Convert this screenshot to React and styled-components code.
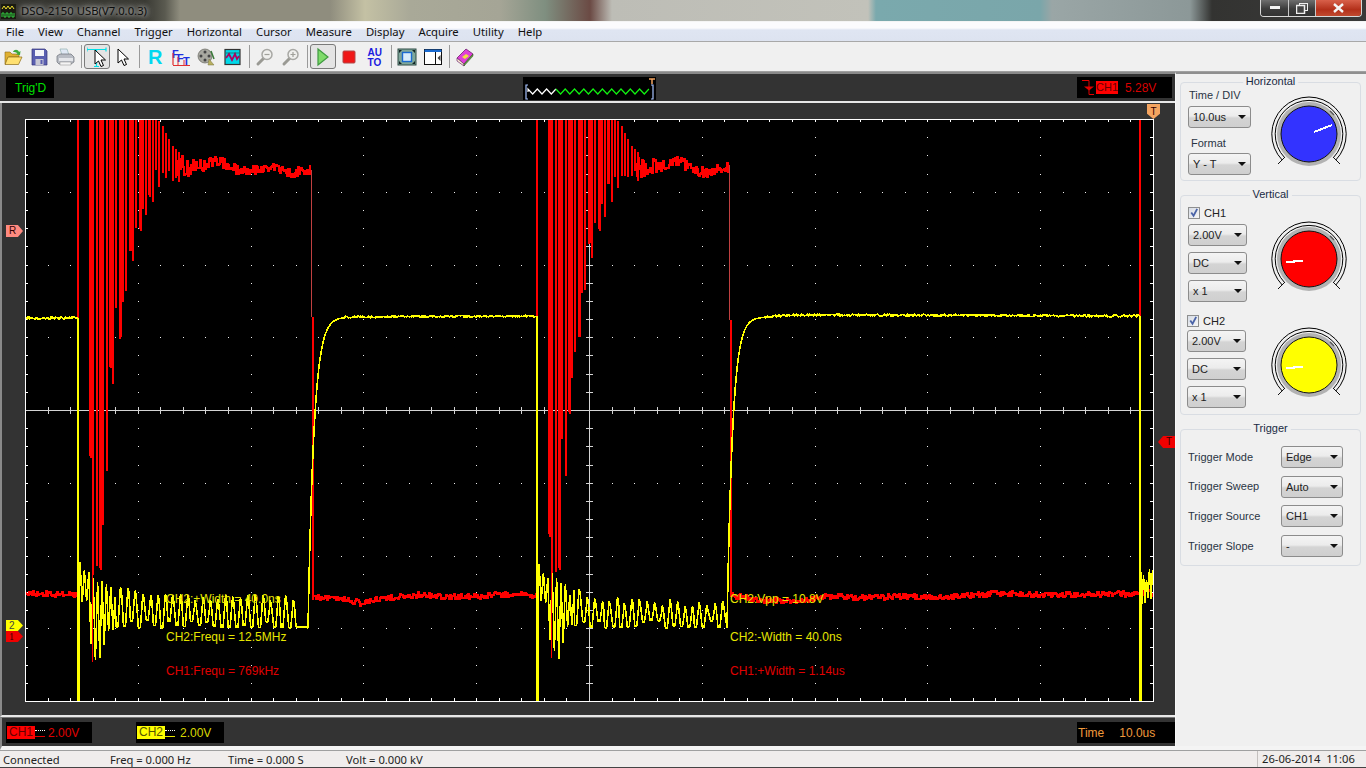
import styled, { createGlobalStyle } from "styled-components";

const GlobalStyle = createGlobalStyle`
  html, body { margin: 0; padding: 0; background: #f0f0f0; overflow: hidden; }
  * { box-sizing: border-box; }
`;

const Window = styled.div`
  width: 1366px;
  height: 768px;
  display: flex;
  flex-direction: column;
  overflow: hidden;
  font-family: "Liberation Sans", Arial, sans-serif;
  font-size: 11px;
  color: #111;
`;

/* ---------- title bar ---------- */
const TitleBar = styled.div`
  height: 22px;
  flex: none;
  display: flex;
  align-items: flex-start;
  border-bottom: 1px solid #f4f4f4;
  background: linear-gradient(90deg, #33332e 0, #3a3a34 145px, #5a5a50 165px, #8f8d7e 180px, #8f8d7e 330px, #c4c1a4 365px,
    #a9a998 410px, #a5a596 500px, #7f8f80 545px, #6b4a44 590px, #bdbdb6 612px, #c2c2ba 868px, #7aa9ad 876px, #7aa6aa 1040px,
    #9aa6a6 1052px, #8c9898 1190px, #333331 1212px, #3a3a3a 1366px);
`;
const AppIcon = styled.svg`
  width: 15px;
  height: 15px;
  margin: 4px 0 0 1px;
`;
const TitleText = styled.span`
  margin: 3px 0 0 5px;
  font-family: "Noto Sans", sans-serif;
  font-size: 11.3px;
  color: #0c0c0c;
  text-shadow: 0 0 4px rgba(255, 255, 255, 0.8), 0 0 8px rgba(255, 255, 255, 0.6), 0 0 12px rgba(255, 255, 255, 0.4);
`;
const WinButtons = styled.div`
  margin-left: auto;
  margin-right: 4px;
  display: flex;
  height: 17px;
  border: 1px solid #d8d8d8;
  border-top: 0;
  border-radius: 0 0 4px 4px;
  overflow: hidden;
`;
const WinButton = styled.div`
  width: ${(p) => p.$w}px;
  display: flex;
  align-items: center;
  justify-content: center;
  border-left: ${(p) => (p.$first ? "0" : "1px solid #c8c8c8")};
  background: ${(p) => (p.$close ? "linear-gradient(#d8604a, #b3301a 60%, #c04a30)" : "linear-gradient(#6e6e6e, #3c3c3c 55%, #333)")};
`;

/* ---------- menu ---------- */
const MenuBar = styled.div`
  height: 20px;
  flex: none;
  display: flex;
  align-items: center;
  gap: 14px;
  padding-left: 6px;
  border-bottom: 1px solid #a8a8a8;
  background: linear-gradient(#fbfbfd 0, #fbfbfd 6px, #dfe5f2 8px, #dde3f0 100%);
  font-family: "Noto Sans", sans-serif;
  font-size: 11.3px;
  color: #111;
`;
const MenuItem = styled.span``;

/* ---------- toolbar ---------- */
const ToolBar = styled.div`
  height: 30px;
  flex: none;
  display: flex;
  align-items: center;
  background: #f0f0f0;
  border-bottom: 1px solid #a0a0a0;
`;
const ToolButton = styled.div`
  width: 26px;
  height: 25px;
  display: flex;
  align-items: center;
  justify-content: center;
  border-radius: 3px;
  border: 1px solid ${(p) => (p.$pressed ? "#7a7a7a" : "transparent")};
  background: ${(p) => (p.$pressed ? "#e4e4e4" : "transparent")};
`;
const ToolSep = styled.div`
  width: 1px;
  height: 23px;
  margin: 0 2px 0 3px;
  background: #9a9a9a;
`;
const Ico = styled.svg`
  width: 20px;
  height: 20px;
  display: block;
`;

/* ---------- main body ---------- */
const Body = styled.div`
  flex: 1;
  min-height: 0;
  display: flex;
`;
const Scope = styled.div`
  width: 1175px;
  flex: none;
  display: flex;
  flex-direction: column;
  background: #333;
`;
const TopStrip = styled.div`
  height: 31px;
  flex: none;
  display: grid;
  grid-template-columns: 1fr 133px 1fr;
  align-items: start;
  padding: 3px 3px 0 6px;
  border-top: 2px solid #8a8a8a;
  border-bottom: 2px solid #e8e8e8;
`;
const BlackBox = styled.div`
  background: #000;
  height: 21px;
  display: flex;
  align-items: center;
  font-size: 12px;
  white-space: nowrap;
`;
const TrigState = styled(BlackBox)`
  width: 48px;
  padding-left: 9px;
  color: #00e000;
`;
const MiniWave = styled.svg`
  display: block;
  width: 133px;
  height: 23px;
  background: #000;
`;
const TrigInfo = styled(BlackBox)`
  justify-self: end;
  width: 95px;
  padding-left: 4px;
`;
const TrigGlyph = styled.svg`
  width: 14px;
  height: 17px;
  margin-right: 1px;
`;
const Chip = styled.span`
  background: ${(p) => p.$bg};
  color: ${(p) => p.$fg};
  font-size: ${(p) => p.$size}px;
  line-height: 13px;
  padding: 0 ${(p) => p.$pad}px;
`;
const InfoValue = styled.span`
  color: ${(p) => p.$color};
  margin-left: ${(p) => p.$gap}px;
`;

const Screen = styled.div`
  position: relative;
  flex: 1;
  min-height: 0;
  padding: 16px 0 0 23px;
  border-left: 2px solid #8a8a8a;
  border-bottom: 2px solid #e8e8e8;
`;
const PlotSvg = styled.svg`
  display: block;
  width: 1129px;
  height: 583px;
`;
const Readout = styled.span`
  position: absolute;
  left: ${(p) => p.$x - 2}px;
  top: ${(p) => p.$y - 103 - 6}px;
  color: ${(p) => p.$color};
  font-size: 12px;
  line-height: 14px;
  white-space: nowrap;
`;
const Marker = styled.div`
  position: absolute;
  left: ${(p) => p.$x - 2}px;
  top: ${(p) => p.$y - 103}px;
  width: ${(p) => p.$w}px;
  height: ${(p) => p.$h}px;
  background: ${(p) => p.$bg};
  clip-path: ${(p) => p.$clip};
  color: ${(p) => p.$fg || "#300"};
  font-family: ${(p) => (p.$serif ? '"Liberation Serif", serif' : '"Liberation Sans", sans-serif')};
  font-size: 10px;
  line-height: ${(p) => p.$h}px;
  text-align: ${(p) => p.$align || "left"};
  padding: 0 3px;
`;

const BottomStrip = styled.div`
  height: 33px;
  flex: none;
  display: flex;
  align-items: flex-start;
  padding: 4px 0 0 4px;
  border-top: 1px solid #777;
  border-bottom: 4px solid #f4f4f4;
  border-left: 2px solid #8a8a8a;
`;
const ChannelBox = styled(BlackBox)`
  width: ${(p) => p.$w}px;
  margin-right: ${(p) => p.$mr}px;
  padding-left: 1px;
`;
const GroundRef = styled.span`
  width: 10px;
  height: 7px;
  flex: none;
  border-top: 1px dotted #fff;
  border-bottom: 1px solid ${(p) => p.$color};
  margin-top: 1px;
`;
const TimeBox = styled(BlackBox)`
  width: 98px;
  margin-left: auto;
  padding-left: 1px;
  color: #f09a3c;
`;

/* ---------- side panel ---------- */
const Panel = styled.div`
  flex: 1;
  display: flex;
  flex-direction: column;
  gap: 14px;
  padding: 8px 5px 0 4px;
  background: #f0f0f0;
  border-top: 2px solid #8f8f8f;
  border-left: 1px solid #f8f8f8;
  border-bottom: 4px solid #f4f4f4;
`;
const Group = styled.div`
  position: relative;
  height: ${(p) => p.$h}px;
  border: 1px solid #d9dde3;
  border-radius: 4px;
  padding: ${(p) => p.$pad || "0"};
`;
const GroupTitle = styled.span`
  position: absolute;
  top: -8px;
  left: 50%;
  transform: translateX(-50%);
  background: #f0f0f0;
  padding: 0 3px;
  font-size: 11px;
  line-height: 13px;
  color: #1a2a44;
  white-space: nowrap;
`;
const KnobRow = styled.div`
  display: flex;
  align-items: flex-start;
`;
const Controls = styled.div`
  width: ${(p) => p.$w}px;
  flex: none;
  display: flex;
  flex-direction: column;
`;
const FieldLabel = styled.div`
  font-size: 11px;
  line-height: 13px;
  color: #2a3444;
  margin: ${(p) => p.$m};
`;
const SelectBox = styled.div`
  width: ${(p) => p.$w}px;
  height: 22px;
  flex: none;
  position: relative;
  display: flex;
  align-items: center;
  padding-left: 4px;
  border: 1px solid #8c8c8c;
  border-radius: 3px;
  background: linear-gradient(#f4f4f4 0, #ececec 45%, #d4d4d4 55%, #cfcfcf 100%);
  font-size: 11px;
  color: #222;
  &::after {
    content: "";
    position: absolute;
    right: 4px;
    top: 8px;
    border-left: 4px solid transparent;
    border-right: 4px solid transparent;
    border-top: 4px solid #111;
  }
`;
const CheckRow = styled.div`
  display: flex;
  align-items: center;
  gap: 4px;
  font-size: 11px;
  color: #222;
  height: 12px;
  margin-bottom: ${(p) => p.$mb}px;
`;
const CheckBox = styled.span`
  width: 12px;
  height: 12px;
  display: flex;
  border: 1px solid #8e8f8f;
  background: linear-gradient(135deg, #d8dde6, #f6f6f6);
`;
const ChannelStack = styled.div`
  display: flex;
  flex-direction: column;
  gap: 6px;
`;
const Knob = styled.svg`
  width: 80px;
  height: 76px;
  flex: none;
  display: block;
  margin: ${(p) => p.$m};
`;
const VerticalSet = styled.div`
  display: flex;
  align-items: flex-start;
  margin: ${(p) => p.$m};
`;
const TriggerRows = styled.div`
  display: flex;
  flex-direction: column;
  gap: 7.7px;
`;
const TriggerRow = styled.div`
  display: flex;
  align-items: center;
  justify-content: space-between;
  padding-right: 17px;
`;

/* ---------- status bar ---------- */
const StatusBar = styled.div`
  height: 18px;
  flex: none;
  display: flex;
  align-items: center;
  padding-left: 3px;
  background: #f0edec;
  border-top: 1px solid #a0a0a0;
  border-bottom: 1px solid #444;
  font-family: "Noto Sans", sans-serif;
  font-size: 11.2px;
  color: #222;
`;
const StatusCell = styled.span`
  width: ${(p) => p.$w}px;
  white-space: nowrap;
`;
const StatusClock = styled.span`
  margin-left: auto;
  width: 109px;
  height: 100%;
  padding-left: 4px;
  border-left: 1px solid #c4c0be;
  white-space: nowrap;
`;

/* ---------- trace generation ---------- */
const makeRng = (seed) => () => {
  seed = (seed * 1664525 + 1013904223) % 4294967296;
  return seed / 4294967296;
};
const interp = (t, x) => {
  if (x <= t[0][0]) return t[0][1];
  for (let i = 1; i < t.length; i++) {
    if (x <= t[i][0]) {
      const [a, b] = [t[i - 1], t[i]];
      return a[1] + ((b[1] - a[1]) * (x - a[0])) / (b[0] - a[0]);
    }
  }
  return t[t.length - 1][1];
};
const r1 = (n) => Math.round(n * 10) / 10;

const rnd = makeRng(77);
const noisy = (x0, x1, table, amp, step = 1) => {
  let d = `M${x0} ${interp(table, x0)}`;
  for (let x = x0; x <= x1; x += step) {
    const a = typeof amp === "function" ? amp(x) : amp;
    const y = r1(interp(table, x) + (rnd() - 0.5) * 2 * a);
    d += `V${y}H${r1(x)}`;
  }
  return d;
};

const botEnv = [[12, 575], [22, 570], [27, 500], [33, 395], [42, 335], [47, 297], [54, 263], [60, 235], [67, 217], [74, 202], [80, 187], [87, 177], [95, 178], [104, 180]];
const topEnv = [[12, 119], [80, 119], [84, 125], [89, 135], [95, 147], [104, 154]];
const bandEnv = [[98, 166], [122, 167], [140, 160], [162, 171], [172, 172], [190, 167], [215, 172], [233, 170]];

const redBurst = (x0, end) => {
  let d = `M${x0} 600V119`;
  let i = 0;
  for (let rel = 12; rel < 104; rel += 3.3, i++) {
    const x = r1(x0 + rel);
    const bot = interp(botEnv, rel);
    const top = interp(topEnv, rel);
    const y = i % 2 ? bot : top + (bot - top) * (0.72 + rnd() * 0.28);
    d += `M${x} ${r1(top)}V${r1(y + (rnd() - 0.5) * 6)}`;
    if (rel < 80 && i % 3 === 0) d += `M${x + 1} ${r1(top)}V${r1(y)}`;
  }
  const amp = (x) => (x - x0 < 128 ? 5 + (128 - (x - x0)) * 0.3 : 5);
  d += noisy(x0 + 98, end, bandEnv.map(([a, b]) => [a + x0, b]), amp);
  return d;
};
const base1 = [[25, 594], [78, 594]];
const base2 = [[314, 597], [345, 599], [362, 603], [385, 598], [420, 595], [450, 597], [480, 596], [510, 594], [537, 595]];
const base3 = [[731, 595], [760, 600], [800, 601], [830, 596], [860, 598], [900, 596], [950, 597], [1000, 593], [1050, 595], [1100, 594], [1140, 594]];
const RED = [
  noisy(25, 78, base1, 2.8),
  redBurst(78, 311),
  noisy(314, 537, base2, 2.8),
  redBurst(537, 729),
  noisy(731, 1140, base3, 2.8),
  "M1140 119V320",
  noisy(1141, 1153, [[1141, 590], [1153, 594]], 4),
].join("");
const RED_THIN = "M311.5 170V317M729.5 165V320";
const RED_DROP = "M313 317V600M731 320V596";
const RED_SPIKES = "M92 560V662M551 560V658";

const earlyTop = [[2, 562], [10, 570], [20, 575], [30, 585], [40, 590]];
const earlyBot = [[2, 600], [10, 610], [14, 660], [22, 665], [30, 640], [38, 632], [45, 630]];
const ringing = (x0, endRel, topTable, bottom) => {
  let d = `M${x0 + 1} 701V568`;
  let up = true;
  for (let rel = 2; rel < 38; rel += 2.2, up = !up) {
    const y = up ? interp(earlyTop, rel) + rnd() * 10 : interp(earlyBot, rel) - rnd() * 14;
    d += `L${r1(x0 + rel)} ${r1(y)}`;
  }
  for (let rel = 38; rel < endRel; rel += 7.5) {
    const x = x0 + rel + (rnd() - 0.5);
    const top = interp(topTable, rel) + (rnd() - 0.5) * 7;
    const bot = bottom - rnd() * 3 - (rnd() > 0.8 ? 5 : 0);
    d += `L${r1(x)} ${r1(bot)}H${r1(x + 2)}L${r1(x + 4)} ${r1(top + 6)}L${r1(x + 4.5)} ${r1(top)}L${r1(x + 5.5)} ${r1(top + 4)}`;
  }
  return d;
};
const riseTo = (x0, x1, tau) => {
  let d = "";
  for (let x = x0; x <= x1; x += 1) {
    d += `L${x} ${r1(317 + 311 * Math.exp(-(x - x0) / tau))}`;
  }
  return d;
};
const flat1 = [[25, 318], [345, 317], [537, 316]];
const flat2 = [[765, 317], [790, 315], [850, 315], [1140, 316]];
let squiggle = "M1141 701V572";
for (let x = 1142, up = false; x < 1154; x += 1.5, up = !up) squiggle += `L${x} ${up ? 566 + rnd() * 14 : 596 + rnd() * 12}`;
const YELLOW = [
  noisy(25, 78, flat1, 1.2),
  "M78 318V701",
  ringing(78, 218, [[30, 585], [60, 592], [100, 597], [218, 599]], 628) + "L296 627H307" + riseTo(308, 345, 6),
  noisy(345, 537, flat1, 1),
  "M537 316V701",
  ringing(537, 186, [[30, 590], [60, 598], [100, 602], [186, 604]], 628) + riseTo(727, 765, 5.6),
  noisy(765, 1140, flat2, 1.2),
  "M1140 316V701",
  squiggle,
].join("");

/* graticule */
const DX = 22.56;
const DY = 18.19;
const L = 25, T = 119, R = 1153, B = 701;
let dots = "", ticks = "", centre = "";
for (let i = 1; i < 50; i++) {
  const x = Math.round(L + i * DX) + 0.5;
  ticks += `M${x} ${T}v${i === 25 ? 6 : 3}M${x} ${B}v${i === 25 ? -6 : -3}`;
  centre += `M${x} 407v7`;
  for (let k = 1; k < 8; k++) dots += `M${x - 0.5} ${Math.round(T + k * 72.75)}h1v1h-1z`;
}
for (let i = 1; i < 32; i++) {
  const y = Math.round(T + i * DY) + 0.5;
  ticks += `M${L} ${y}h3M${R} ${y}h-3`;
  centre += `M586 ${y}h7`;
  for (let k = 1; k < 10; k++) dots += `M${Math.round(L + k * 112.8)} ${y - 0.5}h1v1h-1z`;
}

/* ---------- small drawings ---------- */
const Graticule = () => (
  <PlotSvg viewBox="25 119 1129 583" shapeRendering="crispEdges">
    <rect x="25" y="119" width="1129" height="583" fill="#000" />
    <path d={dots} fill="#eee" />
    <path d={ticks} stroke="#fff" strokeWidth="1" fill="none" />
    <path d="M589.5 119V701M25 410.5H1153" stroke="#d4d4d4" strokeWidth="1" />
    <path d={centre} stroke="#d4d4d4" strokeWidth="1" fill="none" />
    <path d={RED} stroke="#ff0000" strokeWidth="2" fill="none" />
    <path d={RED_THIN} stroke="#c04040" strokeWidth="1" fill="none" />
    <path d={RED_DROP} stroke="#ff0000" strokeWidth="2" fill="none" />
    <path d={YELLOW} stroke="#ffff00" strokeWidth="1.6" fill="none" strokeLinejoin="bevel" />
    <path d={RED_SPIKES} stroke="#ff0000" strokeWidth="1" fill="none" />
    <rect x="25.5" y="119.5" width="1127.5" height="581.5" fill="none" stroke="#fff" strokeWidth="1" />
  </PlotSvg>
);

const zigzag = (() => {
  let white = "M5 15";
  let x = 5, up = true;
  const pts = [];
  while (x < 126) {
    pts.push([r1(x), up ? 12 : 17]);
    x += 4.65;
    up = !up;
  }
  pts.forEach(([a, b]) => {
    if (a <= 35) white += `L${a} ${b}`;
  });
  const split = pts.findIndex(([a]) => a > 35) - 1;
  const green = "M" + pts.slice(split).map(([a, b]) => `${a} ${b}`).join("L");
  return { white, green };
})();

const Dial = ({ color, needle, m }) => {
  const arc = (r) => `M${-r * 0.72} ${r * 0.7}A${r} ${r} 0 1 1 ${r * 0.72} ${r * 0.7}`;
  return (
    <Knob viewBox="-40 -38 80 76" $m={m}>
      <path d={arc(37.2)} fill="none" stroke="#000" strokeWidth="1" />
      <path d={arc(33.8)} fill="none" stroke="#000" strokeWidth="1" />
      <circle r="32" fill="#b2b2b2" />
      <path d="M21 -23l4 4" stroke="#555" strokeWidth="1.2" />
      <path d="M-24 23L-31 30M24 23L31 30" stroke="#111" strokeWidth="1" />
      <circle r="28" fill={color} stroke="#111" strokeWidth="1" />
      <path d={needle} fill="none" stroke="#fff" strokeWidth="2" shapeRendering="crispEdges" />
    </Knob>
  );
};

const Tick = () => (
  <svg width="10" height="10" viewBox="0 0 10 11">
    <path d="M2 5l2.5 3.5L8.5 1" fill="none" stroke="#4b64a8" strokeWidth="2" />
  </svg>
);

const OpenIcon = () => (
  <Ico viewBox="0 0 20 20">
    <path d="M2 5h5l2 2h7v3H6l-3 7H2z" fill="#e0b030" stroke="#8a6a18" strokeWidth=".6" />
    <path d="M5 10h14l-3.500 7.500H2z" fill="#ffe070" stroke="#8a6a18" strokeWidth=".7" />
    <path d="M10 5c1-3 5-3 6 0l1.500-1-.5 4-4-.5 1.500-1c-1-1.500-3-1.500-4.500-1.500z" fill="#3aa83a" />
  </Ico>
);
const SaveIcon = () => (
  <Ico viewBox="0 0 20 20">
    <path d="M3 2h13l2 2v14H3z" fill="#5a5fb0" stroke="#33357a" strokeWidth=".7" />
    <rect x="6" y="3" width="9" height="6" fill="#f4f4f8" />
    <rect x="6.500" y="12" width="8" height="6" fill="#c8c8d4" />
    <rect x="11.500" y="13" width="2" height="4" fill="#5a5fb0" />
  </Ico>
);
const PrintIcon = () => (
  <Ico viewBox="0 0 20 20">
    <path d="M5 2h7l2 6H7z" fill="#dfe8f4" stroke="#8aa" strokeWidth=".6" />
    <path d="M2 9l3-2h11l3 3v5l-3 2H4l-2-2z" fill="#b8bcc4" stroke="#6c7078" strokeWidth=".7" />
    <path d="M4 11h14v3H4z" fill="#e4e6ea" />
    <path d="M5 15h11v3H5z" fill="#f4f4f4" stroke="#888" strokeWidth=".5" />
  </Ico>
);
const Arrow = ({ transform }) => (
  <path d="M0 0v14l3.500-3 2.500 5.500 2.500-1-2.500-5.500h4.500z" fill="#fff" stroke="#000" strokeWidth="1" transform={transform} strokeLinejoin="miter" />
);
const CursorIcon = () => (
  <Ico viewBox="0 0 20 20">
    <path d="M0 2.500h19M9.500 2.500v17M0 .5v4M19 .5v4M7 19.500h5" stroke="#00e0e8" strokeWidth="1.200" fill="none" />
    <Arrow transform="translate(8 3)" />
  </Ico>
);
const ArrowIcon = () => (
  <Ico viewBox="0 0 20 20">
    <Arrow transform="translate(5 2)" />
  </Ico>
);
const IconText = styled.text`
  font-family: "Liberation Sans", sans-serif;
  font-weight: 700;
`;
const RIcon = () => (
  <Ico viewBox="0 0 20 20">
    <IconText x="3" y="17" fontSize="20" fill="#00d8f0">R</IconText>
  </Ico>
);
const FftIcon = () => (
  <Ico viewBox="0 0 20 20">
    <IconText x="1" y="11" fontSize="11" fill="#2030e0">F</IconText>
    <IconText x="6" y="15" fontSize="11" fill="#2030e0">F</IconText>
    <IconText x="12" y="18" fontSize="11" fill="#2030e0">T</IconText>
    <path d="M2 6v12M2 18.500h17" stroke="#e03030" strokeWidth="1.200" />
    <path d="M7 10v8M13 13v5" stroke="#e03030" strokeWidth="1" />
  </Ico>
);
const ReelIcon = () => (
  <Ico viewBox="0 0 20 20">
    <circle cx="8" cy="9" r="7" fill="#a8a8a0" stroke="#66665e" strokeWidth=".7" />
    <circle cx="8" cy="5" r="1.500" fill="#444" />
    <circle cx="4" cy="9" r="1.500" fill="#444" />
    <circle cx="12" cy="9" r="1.500" fill="#444" />
    <circle cx="8" cy="13" r="1.500" fill="#444" />
    <path d="M12 12l5 6h-6z" fill="#b8b060" stroke="#7a7440" strokeWidth=".5" />
    <path d="M14 4l3 8" stroke="#3a7a3a" strokeWidth="1.500" />
  </Ico>
);
const WaveIcon = () => (
  <Ico viewBox="0 0 20 20">
    <rect x="2" y="2.500" width="15" height="15" fill="#00d8e8" stroke="#333" strokeWidth="1.200" />
    <path d="M3 11l3-4 3 6 3-6 2 5 2-3" fill="none" stroke="#b00060" strokeWidth="1.800" />
    <path d="M3 6h13" stroke="#333" strokeWidth=".6" />
  </Ico>
);
const LensIcon = ({ plus }) => (
  <Ico viewBox="0 0 20 20">
    <path d="M9 11l-6 6" stroke="#9a9a94" strokeWidth="3" strokeLinecap="round" />
    <circle cx="12" cy="7.500" r="5" fill="#f0f0ee" stroke="#a8a8a4" strokeWidth="1.500" />
    <path d={plus ? "M9.500 7.500h5M12 5v5" : "M9.500 7.500h5"} stroke="#a0a09a" strokeWidth="1.200" />
  </Ico>
);
const PlayIcon = () => (
  <Ico viewBox="0 0 20 20">
    <path d="M5 2l10 8-10 8z" fill="#7edb6a" stroke="#3f9a40" strokeWidth="1.200" />
  </Ico>
);
const StopIcon = () => (
  <Ico viewBox="0 0 20 20">
    <rect x="4" y="4" width="12" height="12" rx="1" fill="#f01818" stroke="#b04848" strokeWidth="1" />
  </Ico>
);
const AutoIcon = () => (
  <Ico viewBox="0 0 20 20">
    <IconText x="2.500" y="9" fontSize="10" fill="#1a1ae0">AU</IconText>
    <IconText x="2.500" y="18.500" fontSize="10" fill="#1a1ae0">TO</IconText>
  </Ico>
);
const FullIcon = () => (
  <Ico viewBox="0 0 20 20">
    <rect x="1" y="2" width="18" height="16" fill="#7fa79a" stroke="#2e4a44" strokeWidth="1" />
    <rect x="5.500" y="5.500" width="9" height="9" fill="#d8ecfa" stroke="#1a6ad0" strokeWidth="1.400" />
    <path d="M2 3h3L2 6zM18 3h-3l3 3zM2 17h3l-3-3zM18 17h-3l3-3z" fill="#122" />
  </Ico>
);
const DockIcon = () => (
  <Ico viewBox="0 0 20 20">
    <rect x="1.500" y="2.500" width="17" height="15" fill="#fff" stroke="#111" strokeWidth="1" />
    <rect x="1.500" y="2.500" width="17" height="2.500" fill="#1a6ad0" />
    <path d="M12.500 5v12.500" stroke="#111" strokeWidth="1" />
    <path d="M17.500 8v6l-3-3z" fill="#444" />
  </Ico>
);
const BookIcon = () => (
  <Ico viewBox="0 0 20 20">
    <path d="M2 11l9-9 7 5-9 10z" fill="#e040d8" stroke="#702070" strokeWidth=".8" />
    <path d="M2 11v3l7 5v-2z" fill="#f8f0d0" stroke="#702070" strokeWidth=".7" />
    <path d="M9 19l9-10V7l-9 10z" fill="#60a040" stroke="#305020" strokeWidth=".5" />
    <path d="M7 10l4-3 3 2-4 3z" fill="#f0e040" />
  </Ico>
);

/* ---------- data ---------- */
const menus = ["File", "View", "Channel", "Trigger", "Horizontal", "Cursor", "Measure", "Display", "Acquire", "Utility", "Help"];
const readouts = [
  { x: 166, y: 598, c: "#e6e600", t: "CH2:+Width = 40.0ns" },
  { x: 166, y: 636, c: "#e6e600", t: "CH2:Frequ = 12.5MHz" },
  { x: 166, y: 670, c: "#e00000", t: "CH1:Frequ = 769kHz" },
  { x: 730, y: 598, c: "#e6e600", t: "CH2:Vpp = 10.8V" },
  { x: 730, y: 636, c: "#e6e600", t: "CH2:-Width = 40.0ns" },
  { x: 730, y: 670, c: "#e00000", t: "CH1:+Width = 1.14us" },
];
const triggers = [
  ["Trigger Mode", "Edge"],
  ["Trigger Sweep", "Auto"],
  ["Trigger Source", "CH1"],
  ["Trigger Slope", "-"],
];
const PENT_R = "polygon(0 0, 70% 0, 100% 50%, 70% 100%, 0 100%)";
const PENT_L = "polygon(30% 0, 100% 0, 100% 100%, 30% 100%, 0 50%)";
const PENT_D = "polygon(0 0, 100% 0, 100% 65%, 50% 100%, 0 65%)";

const ChannelControls = ({ name, gap, w }) => (
  <ChannelStack>
    <CheckRow $mb={gap - 6}>
      <CheckBox><Tick /></CheckBox>
      {name}
    </CheckRow>
    <SelectBox $w={w}>2.00V</SelectBox>
    <SelectBox $w={w}>DC</SelectBox>
    <SelectBox $w={w}>x 1</SelectBox>
  </ChannelStack>
);

export default function App() {
  return (
    <Window>
      <GlobalStyle />
      <TitleBar>
        <AppIcon viewBox="0 0 15 15">
          <rect width="15" height="15" fill="#1a1a10" />
          <path d="M1 5l2-3 2 3 2-3 2 3 2-3 2 3" fill="none" stroke="#f0e030" strokeWidth="1" />
          <path d="M1 13V9h2v4h2V9h2v4h2V9h2v4h2V9" fill="none" stroke="#30d040" strokeWidth="1" />
        </AppIcon>
        <TitleText>DSO-2150 USB(V7.0.0.3)</TitleText>
        <WinButtons>
          <WinButton $w={27} $first>
            <svg width="10" height="4"><rect width="10" height="3" fill="#f4f4f4" /></svg>
          </WinButton>
          <WinButton $w={27}>
            <svg width="12" height="11" viewBox="0 0 12 11">
              <rect x="3.500" y=".5" width="8" height="7" fill="none" stroke="#eee" />
              <rect x=".5" y="2.500" width="8" height="8" fill="#444" stroke="#eee" strokeWidth="1.500" />
            </svg>
          </WinButton>
          <WinButton $w={46} $close>
            <svg width="11" height="10" viewBox="0 0 11 10">
              <path d="M1 1l9 8M10 1l-9 8" stroke="#f4f4f4" strokeWidth="2.400" />
            </svg>
          </WinButton>
        </WinButtons>
      </TitleBar>

      <MenuBar>
        {menus.map((m) => (
          <MenuItem key={m}>{m}</MenuItem>
        ))}
      </MenuBar>

      <ToolBar>
        <ToolButton><OpenIcon /></ToolButton>
        <ToolButton><SaveIcon /></ToolButton>
        <ToolButton><PrintIcon /></ToolButton>
        <ToolSep />
        <ToolButton $pressed><CursorIcon /></ToolButton>
        <ToolButton><ArrowIcon /></ToolButton>
        <ToolSep />
        <ToolButton><RIcon /></ToolButton>
        <ToolButton><FftIcon /></ToolButton>
        <ToolButton><ReelIcon /></ToolButton>
        <ToolButton><WaveIcon /></ToolButton>
        <ToolSep />
        <ToolButton><LensIcon /></ToolButton>
        <ToolButton><LensIcon plus /></ToolButton>
        <ToolSep />
        <ToolButton $pressed><PlayIcon /></ToolButton>
        <ToolButton><StopIcon /></ToolButton>
        <ToolButton><AutoIcon /></ToolButton>
        <ToolSep />
        <ToolButton><FullIcon /></ToolButton>
        <ToolButton><DockIcon /></ToolButton>
        <ToolSep />
        <ToolButton><BookIcon /></ToolButton>
      </ToolBar>

      <Body>
        <Scope>
          <TopStrip>
            <TrigState>Trig'D</TrigState>
            <MiniWave viewBox="0 0 133 23">
              <path d="M5 8H3V22H5M128 8h2V22H128" fill="none" stroke="#a8c4ff" strokeWidth="1.200" />
              <path d={zigzag.white} fill="none" stroke="#fff" strokeWidth="1.200" />
              <path d={zigzag.green} fill="none" stroke="#10f010" strokeWidth="1.200" />
              <path d="M126 2h6M129 2v5" stroke="#f4a460" strokeWidth="1.500" />
            </MiniWave>
            <TrigInfo>
              <TrigGlyph viewBox="0 0 14 17">
                <path d="M1 1.500h7V15.500h5" fill="none" stroke="#e00000" strokeWidth="1" />
                <path d="M3 7.500h10L8 11.500z" fill="#e00000" />
              </TrigGlyph>
              <Chip $bg="#ff0000" $fg="#600" $size={11} $pad={0}>CH1</Chip>
              <InfoValue $color="#d80000" $gap={7}>5.28V</InfoValue>
            </TrigInfo>
          </TopStrip>

          <Screen>
            <Graticule />
            {readouts.map((r) => (
              <Readout key={r.t} $x={r.x} $y={r.y} $color={r.c}>{r.t}</Readout>
            ))}
            <Marker $x={6} $y={225} $w={17} $h={12} $bg="#ff8a80" $clip={PENT_R}>R</Marker>
            <Marker $x={6} $y={620} $w={17} $h={11} $bg="#ffff00" $clip={PENT_R} $fg="#444">2</Marker>
            <Marker $x={6} $y={631} $w={17} $h={11} $bg="#f00000" $clip={PENT_R} $serif>1</Marker>
            <Marker $x={1147} $y={104} $w={13} $h={15} $bg="#f4a460" $clip={PENT_D} $align="center">T</Marker>
            <Marker $x={1158} $y={436} $w={17} $h={12} $bg="#f00000" $clip={PENT_L} $align="right">T</Marker>
          </Screen>

          <BottomStrip>
            <ChannelBox $w={86} $mr={44}>
              <Chip $bg="#ff0000" $fg="#600" $size={12} $pad={2}>CH1</Chip>
              <GroundRef $color="#e00000" />
              <InfoValue $color="#e00000" $gap={3}>2.00V</InfoValue>
            </ChannelBox>
            <ChannelBox $w={88} $mr={0}>
              <Chip $bg="#ffff00" $fg="#550" $size={12} $pad={2}>CH2</Chip>
              <GroundRef $color="#e6e600" />
              <InfoValue $color="#d8d800" $gap={5}>2.00V</InfoValue>
            </ChannelBox>
            <TimeBox>
              Time
              <InfoValue $color="#f09a3c" $gap={15}>10.0us</InfoValue>
            </TimeBox>
          </BottomStrip>
        </Scope>

        <Panel>
          <Group $h={99} $pad="6px 0 0 7px">
            <GroupTitle>Horizontal</GroupTitle>
            <KnobRow>
              <Controls $w={63}>
                <FieldLabel $m="0 0 4px 1px">Time / DIV</FieldLabel>
                <SelectBox $w={63}>10.0us</SelectBox>
                <FieldLabel $m="9px 0 3px 3px">Format</FieldLabel>
                <SelectBox $w={63}>Y - T</SelectBox>
              </Controls>
              <Dial color="#3333ff" needle="M5 -2L23 -9" m="7px 0 0 18px" />
            </KnobRow>
          </Group>

          <Group $h={220} $pad="11px 0 0 7px">
            <GroupTitle>Vertical</GroupTitle>
            <VerticalSet $m="0">
              <ChannelControls name="CH1" gap={5} w={59} />
              <Dial color="#ff0000" needle="M-23 3H-15V2H-6" m="14px 0 0 22px" />
            </VerticalSet>
            <VerticalSet $m="13px 0 0 -1px">
              <ChannelControls name="CH2" gap={3} w={59} />
              <Dial color="#ffff00" needle="M-23 3H-15V2H-6" m="12px 0 0 23px" />
            </VerticalSet>
          </Group>

          <Group $h={137} $pad="16px 0 0 7px">
            <GroupTitle>Trigger</GroupTitle>
            <TriggerRows>
              {triggers.map(([label, value]) => (
                <TriggerRow key={label}>
                  <FieldLabel $m="0">{label}</FieldLabel>
                  <SelectBox $w={62}>{value}</SelectBox>
                </TriggerRow>
              ))}
            </TriggerRows>
          </Group>
        </Panel>
      </Body>

      <StatusBar>
        <StatusCell $w={107}>Connected</StatusCell>
        <StatusCell $w={118}>Freq = 0.000 Hz</StatusCell>
        <StatusCell $w={118}>Time = 0.000 S</StatusCell>
        <StatusCell $w={118}>Volt = 0.000 kV</StatusCell>
        <StatusClock>26-06-2014&nbsp; 11:06</StatusClock>
      </StatusBar>
    </Window>
  );
}
